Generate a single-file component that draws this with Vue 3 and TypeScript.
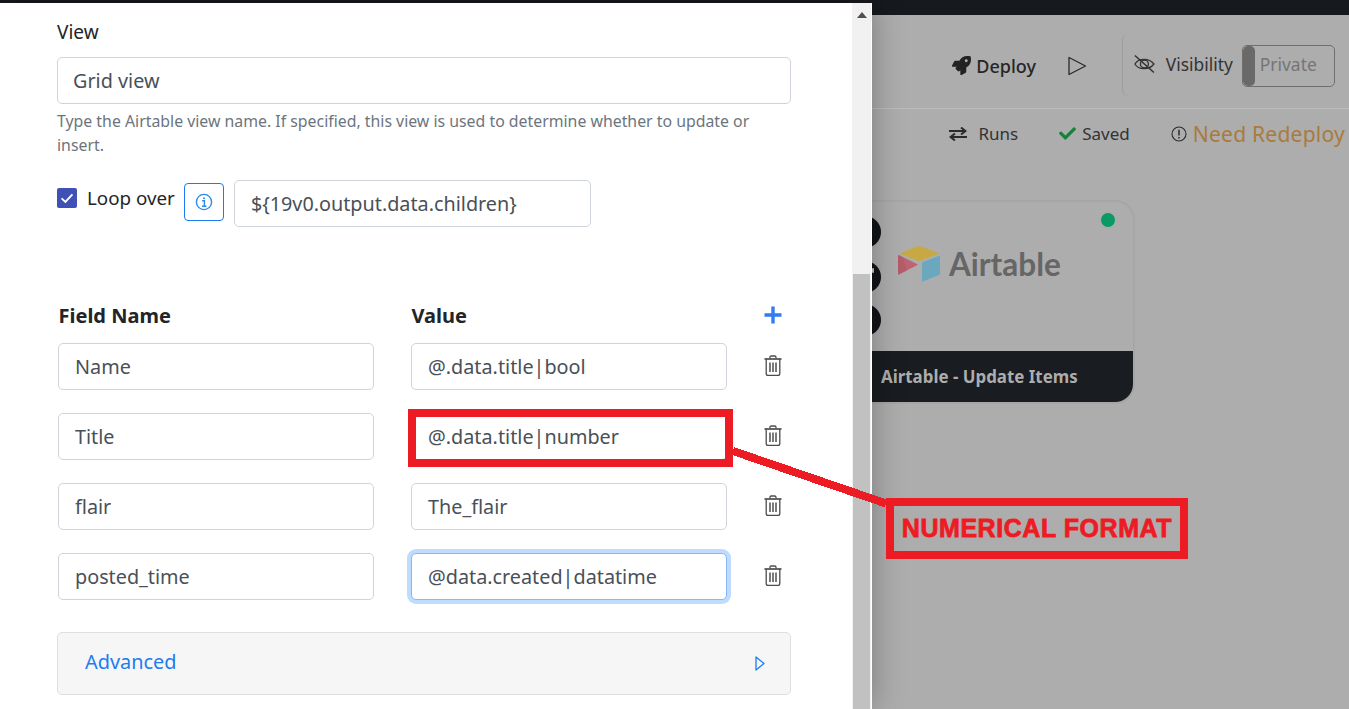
<script setup lang="ts">
interface Row { name: string; value: string; focused?: boolean }
const rows: Row[] = [
  { name: 'Name', value: '@.data.title|bool' },
  { name: 'Title', value: '@.data.title|number' },
  { name: 'flair', value: 'The_flair' },
  { name: 'posted_time', value: '@data.created|datatime', focused: true },
]
</script>

<template>
  <div class="page">
    <div class="topbar"></div>
    <header class="toolbar">
      <span class="deploy">
        <svg class="rocket" viewBox="0 0 512 512"><path d="M505.05 19.1a15.89 15.89 0 0 0-12.2-12.2C460.65 0 435.46 0 410.36 0c-103.2 0-165.1 55.2-211.29 128H94.87A48 48 0 0 0 52 154.49l-49.42 98.8A24 24 0 0 0 24.07 288h103.77l-22.47 22.47a32 32 0 0 0 0 45.25l50.9 50.91a32 32 0 0 0 45.26 0L224 384.16V488a24 24 0 0 0 34.7 21.49l98.7-49.39a47.91 47.91 0 0 0 26.5-42.9V312.79c72.59-46.3 128-108.4 128-211.09.1-25.2.1-50.4-6.85-82.6zM384 168a40 40 0 1 1 40-40 40 40 0 0 1-40 40z"/></svg>
        Deploy
      </span>
      <svg class="play" viewBox="0 0 20 20"><path d="M2 1.5 L18.5 10 L2 18.5 Z" fill="none" stroke="#2a2a2a" stroke-width="1.3" stroke-linejoin="round"/></svg>
      <div class="visibility">
        <svg class="eye" viewBox="0 0 24 20" fill="none" stroke="#333" stroke-width="1.4">
          <path d="M2 10 C6 3.5 17 3.5 22 10 C17 16.5 6 16.5 2 10 Z"/>
          <circle cx="12" cy="10" r="4.2"/>
          <path d="M2 1 L22 19" stroke-width="1.6"/>
        </svg>
        <span class="vis-label">Visibility</span>
        <div class="toggle"><span class="knob"></span><span class="private">Private</span></div>
      </div>
    </header>
    <div class="subbar">
      <span class="status runs">
        <svg class="swap" viewBox="0 0 18 14" fill="none" stroke="#2b2b2b" stroke-width="2">
          <path d="M0 4 H16 M12 0.5 L16.5 4 L12 7.5" />
          <path d="M18 10 H2 M6 6.5 L1.5 10 L6 13.5" />
        </svg>
        Runs
      </span>
      <span class="status saved">
        <svg class="check" viewBox="0 0 512 512"><path fill="#19813b" d="M173.898 439.404l-166.4-166.4c-9.997-9.997-9.997-26.206 0-36.204l36.203-36.204c9.997-9.998 26.207-9.998 36.204 0L192 312.69 432.095 72.596c9.997-9.997 26.207-9.997 36.204 0l36.203 36.204c9.997 9.997 9.997 26.206 0 36.204l-294.4 294.401c-9.998 9.997-26.207 9.997-36.204-.001z"/></svg>
        Saved
      </span>
      <span class="status redeploy">
        <svg class="warn" viewBox="0 0 16 16" fill="none" stroke="#2b2b2b" stroke-width="1.1">
          <circle cx="8" cy="8" r="7"/>
          <path d="M8 3.8 V9.4" stroke-width="1.5"/>
          <path d="M8 11 V12.4" stroke-width="1.5"/>
        </svg>
        <span class="need">Need Redeploy</span>
      </span>
    </div>

    <div class="node">
      <span class="port port-a"></span>
      <span class="port port-b"></span>
      <span class="port port-c"></span>
      <span class="dot"></span>
      <div class="node-body">
        <svg class="air-logo" viewBox="0 0 42 36">
          <path d="M19 .6 L2.8 7 Q1.8 7.5 2.8 8 L19 14.4 Q21 15 23 14.4 L40.5 7.8 Q41 7.4 40.5 7 L23 .6 Q21 0 19 .6Z" fill="#c7a842"/>
          <path d="M24 17 V34.5 Q24 35.8 25.3 35.3 L41 29 Q42 28.5 42 27.5 V10.5 Q42 9.4 41 9.8 L25 16 Q24 16.3 24 17Z" fill="#6ba8bf"/>
          <path d="M0 10 V27.5 Q0 29 1.4 28.3 L19 19.2 Q20.3 18.5 19 18 L1.3 9.2 Q0 8.7 0 10Z" fill="#bd6472"/>
          <path d="M0 24 V27.5 Q0 29 1.4 28.3 L9 24.4 L5 11.6 L1.3 9.2 Q0 8.7 0 10Z" fill="#a4505f" opacity=".35"/>
        </svg>
        <span class="air-text">Airtable</span>
      </div>
      <div class="node-foot">Airtable - Update Items</div>
    </div>

    <aside class="drawer">
      <div class="form">
        <label class="view-label">View</label>
        <div class="input wide">Grid view</div>
        <p class="help">Type the Airtable view name. If specified, this view is used to determine whether to update or insert.</p>
        <div class="loop">
          <span class="checkbox">
            <svg viewBox="0 0 20 20"><path d="M4.6 10.4 L8.4 14 L15.4 6.4" fill="none" stroke="#fff" stroke-width="1.9"/></svg>
          </span>
          <span class="loop-label">Loop over</span>
          <button class="info" type="button">
            <svg viewBox="0 0 18 18" fill="none" stroke="#2a8be8" stroke-width="1.4">
              <circle cx="9" cy="9" r="7.6"/>
              <path d="M7.2 7.8 H9.4 V13 M7 13.2 H11.4" stroke-width="1.4"/>
              <path d="M9 4.4 V6" stroke-width="1.9"/>
            </svg>
          </button>
          <div class="input loop-input">${19v0.output.data.children}</div>
        </div>

        <div class="map-heads">
          <div class="map-head">Field Name</div>
          <div class="map-head">Value</div>
          <button class="add" type="button" aria-label="Add">
            <svg viewBox="0 0 18 18"><path d="M9 0.5 V17.5 M0.5 9 H17.5" stroke="#317cf3" stroke-width="3.4" fill="none"/></svg>
          </button>
        </div>
        <div class="map-rows">
          <template v-for="row in rows" :key="row.name">
            <div class="input">{{ row.name }}</div>
            <div class="input" :class="{ focused: row.focused }">{{ row.value }}</div>
            <button class="trash" type="button" aria-label="Delete">
              <svg viewBox="0 0 18 21" fill="none" stroke="#4d4d4d" stroke-width="1.3">
                <path d="M0.5 4 H17.5" stroke-width="1.7"/>
                <path d="M6 3.6 V2.2 Q6 1 7.2 1 H10.8 Q12 1 12 2.2 V3.6"/>
                <path d="M2.2 4.2 V18.4 Q2.2 20.3 4.1 20.3 H13.9 Q15.8 20.3 15.8 18.4 V4.2"/>
                <path d="M6 7.4 V17 M9 7.4 V17 M12 7.4 V17" stroke-width="1.5"/>
              </svg>
            </button>
          </template>
        </div>

        <div class="advanced">
          <span class="adv-label">Advanced</span>
          <svg class="caret" viewBox="0 0 10 15"><path d="M1 1 L9 7.5 L1 14 Z" fill="none" stroke="#1c7cf0" stroke-width="1.3" stroke-linejoin="round"/></svg>
        </div>
      </div>
      <div class="scrollbar">
        <svg class="arrow" viewBox="0 0 10 6"><path d="M5 0 L10 6 H0 Z" fill="#505050"/></svg>
        <div class="thumb"></div>
      </div>
    </aside>

    <svg class="marks" viewBox="0 0 1349 709" shape-rendering="crispEdges">
      <rect x="412" y="413" width="317" height="50" fill="none" stroke="#ed1c24" stroke-width="8"/>
      <path d="M733 451 L886 503.5" stroke="#ed1c24" stroke-width="8" fill="none"/>
    </svg>
    <div class="callout">NUMERICAL FORMAT</div>
  </div>
</template>

<style>
html, body { margin: 0; padding: 0; background: #adadad; }
</style>

<style scoped>
.page {
  position: relative;
  width: 1349px;
  height: 709px;
  overflow: hidden;
  background: #adadad;
  font-family: "Noto Sans", "Open Sans", sans-serif;
  color: #2b2b2b;
}
.topbar { height: 15px; background: #16191d; }
.toolbar {
  height: 94px;
  box-sizing: border-box;
  padding: 8px 14px 0 0;
  border-bottom: 1px solid #bcbcbc;
  display: flex;
  align-items: center;
  justify-content: flex-end;
}
.deploy {
  display: flex;
  align-items: center;
  gap: 5px;
  font-size: 18px;
  font-weight: 500;
  color: #262626;
}
.rocket { width: 19px; height: 19px; fill: #222; }
.play { width: 20px; height: 20px; margin-left: 31px; margin-right: 35px; }
.visibility {
  width: 213px;
  height: 62px;
  box-sizing: border-box;
  margin-top: -1px;
  border-left: 1px solid #9c9c9c;
  border-radius: 6px;
  display: flex;
  align-items: center;
  padding-left: 10px;
}
.eye { width: 23px; height: 20px; margin-top: -3px; }
.vis-label { font-size: 17.4px; color: #333; margin-left: 10px; margin-top: -2px; }
.toggle {
  width: 94px;
  height: 42px;
  box-sizing: border-box;
  margin-left: 9px;
  margin-top: 2px;
  border: 1px solid #6f6f6f;
  border-radius: 5px;
  display: flex;
  align-items: center;
  overflow: hidden;
}
.knob { width: 12px; height: 100%; background: #696969; border-radius: 5px; }
.private { font-size: 17.4px; color: #757575; margin-left: 5px; margin-top: -4px; }
.subbar {
  height: 49px;
  display: flex;
  align-items: center;
  justify-content: flex-end;
  font-size: 17px;
  color: #333;
  margin-right: 4px;
}
.status { display: flex; align-items: center; white-space: nowrap; }
.runs { gap: 11px; margin-right: 41px; }
.saved { gap: 6px; margin-right: 41px; }
.redeploy { gap: 6px; }
.swap { width: 18px; height: 14px; }
.check { width: 17px; height: 17px; }
.warn { width: 16px; height: 16px; }
.need { font-size: 21.1px; color: #a97b3c; letter-spacing: 0.2px; }

.node {
  position: absolute;
  left: 700px;
  top: 200px;
  width: 435px;
  height: 204px;
  box-sizing: border-box;
  border: 2px solid #a6a6a6;
  border-radius: 20px;
  display: flex;
  flex-direction: column;
  background: #adadad;
}
.node-body {
  flex: 1;
  display: flex;
  align-items: flex-start;
  padding: 44px 0 0 196px;
}
.air-logo { width: 42px; height: 36px; }
.air-text {
  font-family: "Lato", sans-serif;
  font-size: 31.5px;
  font-weight: 700;
  color: #666;
  line-height: 36px;
  margin-left: 9px;
}
.node-foot {
  height: 51px;
  background: #191c20;
  border-radius: 0 0 18px 18px;
  color: #adadad;
  font-size: 16.9px;
  font-weight: 700;
  display: flex;
  align-items: center;
  padding-left: 179px;
}
.dot { position: absolute; left: 399px; top: 11px; width: 14px; height: 14px; border-radius: 50%; background: #0a9a63; }
.port { position: absolute; left: 147px; width: 32px; height: 32px; border-radius: 50%; background: #111316; }
.port-a { top: 14px; }
.port-b { top: 59px; }
.port-c { top: 102px; }
.port-b::after {
  content: "";
  position: absolute;
  left: 23px;
  top: 7px;
  width: 2px;
  height: 5px;
  border-radius: 1px;
  background: #c8c8c8;
}

.drawer {
  position: absolute;
  left: 0;
  top: 3px;
  bottom: 0;
  width: 872px;
  background: #fff;
  display: flex;
  box-shadow: 0 0 30px rgba(0, 0, 0, 0.3);
}
.form {
  flex: 1;
  box-sizing: border-box;
  padding: 14px 61px 0 57px;
  min-width: 0;
}
.view-label {
  display: block;
  font-size: 19px;
  line-height: 30px;
  color: #212529;
  height: 40px;
}
.input {
  height: 47px;
  box-sizing: border-box;
  border: 1px solid #ced4da;
  border-radius: 5px;
  background: #fff;
  padding: 0 16px;
  display: flex;
  align-items: center;
  font-size: 19.8px;
  color: #495057;
  white-space: nowrap;
}
.input.wide { padding-left: 15px; }
.input.focused {
  border-color: #86b7fe;
  box-shadow: 0 0 0 4px #bfdcff;
}
.help {
  margin: 5px 0 0;
  font-size: 15.85px;
  line-height: 24px;
  color: #6c757d;
  height: 52px;
}
.loop { display: flex; align-items: flex-start; margin-top: 19px; }
.checkbox {
  width: 20px;
  height: 20px;
  margin-top: 8px;
  border-radius: 2px;
  background: #3f51b5;
  display: block;
}
.checkbox svg { display: block; }
.loop-label { font-size: 18.8px; line-height: 36px; color: #212529; margin-left: 10px; }
.info {
  width: 40px;
  height: 38px;
  box-sizing: border-box;
  margin: 3px 0 0 9px;
  padding: 0;
  border: 1px solid #1c7cf0;
  border-radius: 4px;
  background: #fff;
  display: flex;
  align-items: center;
  justify-content: center;
}
.info svg { width: 18px; height: 18px; }
.loop-input { width: 357px; margin-left: 10px; }
.map-heads, .map-rows {
  display: grid;
  grid-template-columns: 316px 316px 44px;
  column-gap: 37px;
  margin-left: 1px;
}
.map-heads { margin-top: 74px; margin-bottom: 12px; }
.map-rows { grid-auto-rows: 47px; row-gap: 23px; }
.map-head { font-size: 20px; font-weight: 700; color: #212529; line-height: 30px; padding-left: 0.5px; }
.add, .trash {
  padding: 0;
  border: 0;
  background: none;
  display: flex;
  align-items: center;
  justify-content: flex-start;
}
.add svg { width: 18px; height: 18px; margin-top: -3px; }
.trash svg { width: 18px; height: 21px; margin-top: -2px; }
.advanced {
  margin-top: 32px;
  height: 63px;
  box-sizing: border-box;
  border: 1px solid #dfdfdf;
  border-radius: 5px;
  background: #f6f6f6;
  display: flex;
  align-items: center;
  justify-content: space-between;
  padding: 0 25px 0 27px;
  font-size: 19.9px;
  color: #1c7cf0;
}
.adv-label { margin-top: -4px; }
.caret { width: 10px; height: 15px; }
.scrollbar {
  width: 19px;
  background: #f1f1f1;
  border-right: 1px solid #fff;
  position: relative;
}
.arrow { position: absolute; left: 5px; top: 9px; width: 10px; height: 6px; }
.thumb { position: absolute; left: 1px; right: 1px; top: 271px; bottom: 0; background: #c1c1c1; }

.marks { position: absolute; inset: 0; width: 1349px; height: 709px; pointer-events: none; }
.callout {
  position: absolute;
  left: 886px;
  top: 498px;
  width: 302px;
  height: 61px;
  box-sizing: border-box;
  border: 8px solid #ed1c24;
  display: flex;
  align-items: center;
  justify-content: center;
  font-family: "Liberation Sans", Arial, sans-serif;
  font-size: 25px;
  font-weight: 700;
  letter-spacing: 0.55px;
  color: #ed1c24;
  -webkit-text-stroke: 0.8px #ed1c24;
  white-space: nowrap;
}
</style>
